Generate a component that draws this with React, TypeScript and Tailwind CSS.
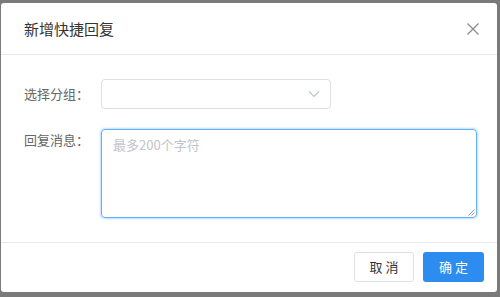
import React from "react";

export default function App() {
  return (
    <div
      className="w-[500px] h-[297px] bg-[#7a7a7a] pt-[3px] pl-[1px] pr-[3px] pb-[5px]"
      style={{ fontFamily: '"Noto Sans CJK SC", "Liberation Sans", sans-serif' }}
    >
      <div className="w-full h-full bg-white rounded-[3px] flex flex-col overflow-hidden">
        <div className="h-[52px] flex items-center justify-between pl-[23px] pr-[16px] border-b border-[#e8e8e8]">
          <span className="text-[15px] text-[#333] mt-[1px]">新增快捷回复</span>
          <svg width="14" height="14" viewBox="0 0 14 14" className="mr-[1px]">
            <path d="M1.5 1.5L12.5 12.5M12.5 1.5L1.5 12.5" stroke="#8c8c8c" strokeWidth="1.3" fill="none" />
          </svg>
        </div>
        <div className="flex-1 flex flex-col pt-[24px] pl-[23px]">
          <div className="flex items-center h-[30px]">
            <span className="w-[77px] text-[13px] text-[#666]">选择分组：</span>
            <div className="w-[230px] h-[30px] border border-[#dcdfe6] rounded-[4px] flex items-center justify-end pr-[10px]">
              <svg width="12" height="8" viewBox="0 0 12 8">
                <path d="M1 1.5L6 6.5L11 1.5" stroke="#c0c4cc" strokeWidth="1.2" fill="none" />
              </svg>
            </div>
          </div>
          <div className="flex mt-[20px]">
            <span className="w-[77px] text-[13px] text-[#666] pt-[1px]">回复消息：</span>
            <div className="relative w-[376px] h-[89px] border border-[#62b0ff] rounded-[4px] shadow-[0_0_2px_1px_rgba(64,158,255,0.35)] pl-[11px] pt-[1px]">
              <span className="text-[13px] text-[#c0c4cc]">最多200个字符</span>
              <svg width="7" height="7" viewBox="0 0 7 7" className="absolute right-[1px] bottom-[1px]">
                <path d="M6.5 0.5L0.5 6.5M6.5 3.5L3.5 6.5" stroke="#999" strokeWidth="1" fill="none" />
              </svg>
            </div>
          </div>
        </div>
        <div className="h-[50px] border-t border-[#e8e8e8] flex items-center justify-end gap-[9px] pr-[13px] pb-[1px]">
          <button className="w-[60px] h-[30px] border border-[#dcdfe6] rounded-[3px] text-[13px] text-[#333] bg-white">
            取 消
          </button>
          <button className="w-[61px] h-[30px] rounded-[3px] text-[13px] text-white bg-[#2d8cf0]">
            确 定
          </button>
        </div>
      </div>
    </div>
  );
}
